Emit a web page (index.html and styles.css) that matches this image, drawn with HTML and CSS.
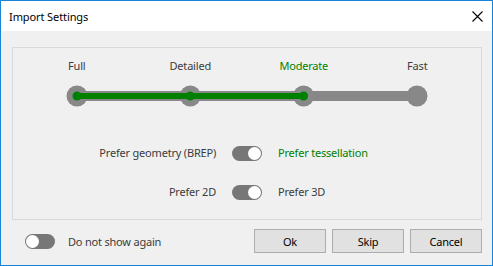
FILE: index.html
```html
<!DOCTYPE html>
<html>
<head>
<meta charset="utf-8">
<link rel="stylesheet" href="styles.css">
</head>
<body>
<div class="window">
  <div class="titlebar">
    <span class="title">Import Settings</span>
    <svg class="close" width="11" height="11" viewBox="0 0 11 11"><path d="M0.5 0.5 L10.5 10.5 M10.5 0.5 L0.5 10.5" stroke="#000" stroke-width="1.1" fill="none"/></svg>
  </div>
  <div class="content">
    <div class="panel">
      <div class="levels">
        <span class="level">Full</span>
        <span class="level">Detailed</span>
        <span class="level active">Moderate</span>
        <span class="level">Fast</span>
      </div>
      <div class="slider">
        <svg width="454" height="22" viewBox="0 0 454 22">
          <line x1="57" y1="11" x2="397" y2="11" stroke="#888" stroke-width="10"/>
          <circle cx="57" cy="11" r="10.5" fill="#888"/>
          <circle cx="170.3" cy="11" r="10.5" fill="#888"/>
          <circle cx="283.6" cy="11" r="10.5" fill="#888"/>
          <circle cx="397" cy="11" r="10.5" fill="#888"/>
          <line x1="57" y1="11" x2="283.6" y2="11" stroke="#008000" stroke-width="6"/>
          <circle cx="57" cy="11" r="4.5" fill="#008000"/>
          <circle cx="170.3" cy="11" r="4.5" fill="#008000"/>
          <circle cx="283.6" cy="11" r="4.5" fill="#008000"/>
        </svg>
      </div>
      <div class="pref pref-first">
        <span class="pref-left">Prefer geometry (BREP)</span>
        <span class="toggle on"><span class="knob"></span></span>
        <span class="pref-right active">Prefer tessellation</span>
      </div>
      <div class="pref pref-second">
        <span class="pref-left">Prefer 2D</span>
        <span class="toggle on"><span class="knob"></span></span>
        <span class="pref-right">Prefer 3D</span>
      </div>
    </div>
    <div class="footer">
      <div class="dont-show">
        <span class="toggle"><span class="knob"></span></span>
        <span class="dont-label">Do not show again</span>
      </div>
      <div class="buttons">
        <button class="btn">Ok</button>
        <button class="btn">Skip</button>
        <button class="btn">Cancel</button>
      </div>
    </div>
  </div>
</div>
</body>
</html>
```

FILE: styles.css
```css
* { box-sizing: border-box; }
html, body { margin: 0; padding: 0; }
body {
  font-family: "Noto Sans", sans-serif;
  font-size: 11px;
  letter-spacing: -0.2px;
  color: #3c3c3c;
}
.window {
  width: 493px;
  height: 266px;
  border: 1px solid #1883d7;
  background: #f0f0f0;
  display: flex;
  flex-direction: column;
}
.titlebar {
  height: 30px;
  background: #fff;
  display: flex;
  align-items: center;
  justify-content: space-between;
  padding: 0 9px 0 8px;
}
.title { color: #000; font-size: 11px; letter-spacing: -0.1px; }
.close { display: block; }
.content {
  padding: 16px 10px 0 11px;
}
.panel {
  height: 173px;
  border: 1px solid #d9d9d9;
  padding-top: 10px;
}
.levels {
  margin-left: 7px;
  width: 454px;
  display: grid;
  grid-template-columns: repeat(4, 1fr);
  line-height: 16px;
}
.level { text-align: center; }
.active { color: #008000; }
.slider {
  margin-left: 7px;
  margin-top: 11px;
  height: 22px;
}
.slider svg { display: block; }
.pref {
  display: grid;
  grid-template-columns: 203px 30px 1fr;
  column-gap: 16px;
  align-items: center;
  height: 16px;
  line-height: 16px;
}
.pref-first { margin-top: 38px; }
.pref-second { margin-top: 23px; }
.pref-left { text-align: right; }
.toggle {
  display: inline-flex;
  align-items: center;
  justify-content: flex-start;
  width: 30px;
  height: 15px;
  border-radius: 8px;
  background: #777;
  padding: 1px;
}
.toggle.on { justify-content: flex-end; }
.knob {
  width: 13px;
  height: 13px;
  border-radius: 50%;
  background: #fff;
}
.footer {
  margin-top: 9px;
  display: flex;
  justify-content: space-between;
  align-items: center;
  height: 24px;
}
.dont-show {
  display: flex;
  align-items: center;
  padding-left: 13px;
  gap: 13px;
}
.buttons { display: flex; gap: 6px; }
.btn {
  width: 72px;
  height: 24px;
  background: #e1e1e1;
  border: 1px solid #adadad;
  font-family: "Noto Sans", sans-serif;
  font-size: 11px;
  letter-spacing: -0.2px;
  color: #000;
  padding: 0;
}
```
